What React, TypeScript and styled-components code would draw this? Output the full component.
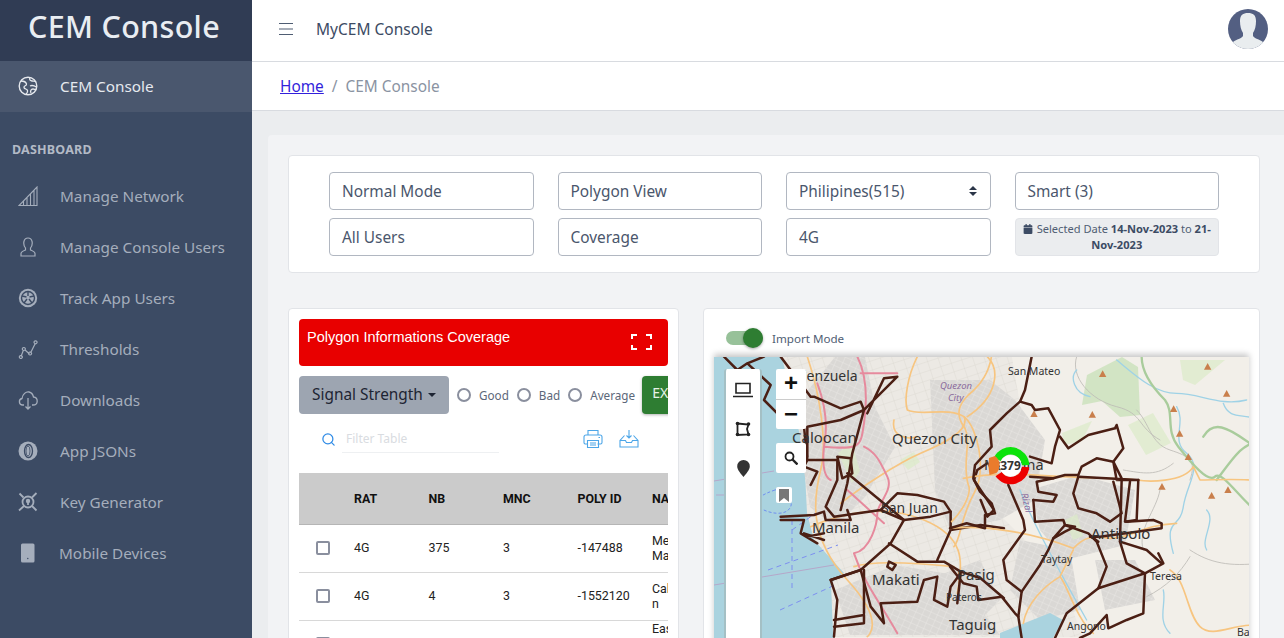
import React from 'react';
import styled, { createGlobalStyle } from 'styled-components';
import { FaCalendar } from 'react-icons/fa';
import { Search } from 'lucide-react';

const GlobalStyle = createGlobalStyle`
  html, body { margin: 0; height: 100%; overflow: hidden; background: #ebedef; }
  * { box-sizing: border-box; }
  body { font-family: "Noto Sans", "Open Sans", sans-serif; color: #3c4b64; }
`;

const Shell = styled.div`
  display: flex;
  height: 100vh;
  overflow: hidden;
`;

const Sidebar = styled.aside`
  flex: 0 0 252px;
  background: #3c4b64;
  color: #aab2bf;
`;

const Brand = styled.div`
  height: 61px;
  padding-right: 4px;
  background: #303c54;
  color: #e9edf2;
  font-size: 30.5px;
  font-weight: 500;
  line-height: 52px;
  text-align: center;
  letter-spacing: 0.3px;
`;

const SideHeading = styled.div`
  padding: 29px 0 0 12px;
  height: 58px;
  font-size: 12.5px;
  font-weight: 700;
  color: #b3bac6;
  letter-spacing: 0.2px;
`;

const NavItem = styled.div<{ $active?: boolean }>`
  display: flex;
  align-items: center;
  height: 51px;
  padding: 0 0 ${(p) => (p.$active ? '2px' : '0')} 18px;
  font-size: 15.3px;
  background: ${(p) => (p.$active ? '#4a576e' : 'transparent')};
  color: ${(p) => (p.$active ? '#e6e9ee' : '#a5aebc')};
`;

const NavIcon = styled.span<{ $tight?: boolean }>`
  flex: 0 0 ${(p) => (p.$tight ? '41px' : '42px')};
  display: flex;
  align-items: center;
`;

const Main = styled.main`
  flex: 1;
  min-width: 0;
`;

const TopBar = styled.header`
  display: flex;
  align-items: center;
  height: 62px;
  padding: 0 16px 4px 27px;
  background: #fff;
  border-bottom: 1px solid #d8dbe0;
`;

const TopTitle = styled.div`
  margin-left: 23px;
  flex: 1;
  font-size: 15.5px;
  color: #3c4b64;
`;

const Crumbs = styled.nav`
  display: flex;
  align-items: center;
  gap: 8px;
  height: 49px;
  padding: 0 0 0 28px;
  background: #fff;
  border-bottom: 1px solid #d8dbe0;
  font-size: 15.4px;
  color: #8a93a2;
`;

const CrumbLink = styled.a`
  color: #321fdb;
  text-decoration: underline;
`;

const Body = styled.div`
  margin: 24px 0 0 16px;
  padding: 20px 24px 0 20px;
  background: #f2f3f5;
  border-radius: 4px 0 0 0;
  height: 600px;
`;

const Card = styled.section`
  background: #fff;
  border: 1px solid #e2e4e8;
  border-radius: 4px;
`;

const FilterCard = styled(Card)`
  display: grid;
  grid-template-columns: repeat(4, 204.5px);
  grid-auto-rows: 38px;
  gap: 8px 24px;
  padding: 16px 0 16px 40px;
  height: 118px;
`;

const Field = styled.div`
  display: flex;
  align-items: center;
  justify-content: space-between;
  padding: 0 12px;
  border: 1px solid #b1b7c1;
  border-radius: 4px;
  font-size: 15.4px;
  color: #4a566c;
  background: #fff;
`;

const DateBox = styled.div`
  padding: 2px 4px;
  background: #ebedef;
  border: 1px solid #e2e4e8;
  border-radius: 4px;
  font-size: 11.1px;
  line-height: 16px;
  text-align: center;
  color: #4f5d73;
  svg { vertical-align: -1px; margin-right: 4px; color: #3c4b64; }
  b { color: #3c4b64; }
`;

const Columns = styled.div`
  display: flex;
  gap: 24px;
  margin-top: 35px;
`;

const TablePanel = styled(Card)`
  flex: 0 0 391px;
  min-width: 0;
  height: 500px;
  padding: 10px;
`;

const TableClip = styled.div`
  overflow: hidden;
  height: 100%;
`;

const MapPanel = styled(Card)`
  flex: 0 0 557px;
  height: 500px;
  padding: 0 10px;
`;

const RedBar = styled.div`
  display: flex;
  justify-content: space-between;
  height: 47px;
  padding: 10px 16px 0 8px;
  background: #e80000;
  border-radius: 4px;
  color: #fff;
  font-family: "Liberation Sans", Arial, sans-serif;
  font-size: 14.5px;
`;

const ExpandIcon = styled.svg`
  margin-top: 5px;
`;

const ControlRow = styled.div`
  display: flex;
  align-items: center;
  margin-top: 10px;
  height: 38px;
  white-space: nowrap;
`;

const DropButton = styled.div`
  display: flex;
  align-items: center;
  flex: 0 0 150px;
  height: 38px;
  justify-content: center;
  gap: 5px;
  padding-bottom: 1px;
  background: #9da5b1;
  border-radius: 4px;
  color: #1d2433;
  font-size: 15.4px;
  &::after {
    content: '';
    border-top: 4px solid #1d2433;
    border-left: 4px solid transparent;
    border-right: 4px solid transparent;
  }
`;

const RadioLabel = styled.label<{ $gap: number }>`
  display: flex;
  align-items: center;
  margin-left: ${(p) => p.$gap}px;
  font-size: 11.7px;
  color: #5c6779;
  gap: 8px;
`;

const RadioDot = styled.span`
  width: 14px;
  height: 14px;
  border: 2px solid #8a8f9e;
  border-radius: 50%;
`;

const ExportButton = styled.div`
  flex: 0 0 80px;
  margin-left: 7px;
  height: 38px;
  line-height: 34px;
  padding-left: 10px;
  background: #2e7d32;
  color: #e8f2e8;
  font-size: 14px;
  border-radius: 4px;
  box-shadow: 0 1px 3px rgba(0, 0, 0, 0.3);
`;

const ToolRow = styled.div`
  display: flex;
  align-items: center;
  height: 59px;
  padding: 0 0 9px 22px;
  color: #2f8be6;
`;

const FilterInput = styled.div`
  width: 157px;
  height: 28px;
  margin-left: 6px;
  padding: 5px 4px;
  border-bottom: 1px solid #eef0f2;
  font-size: 12px;
  color: #d9dce1;
`;

const ToolIcons = styled.div`
  display: flex;
  gap: 16px;
  margin-left: 84px;
`;

const DataTable = styled.table`
  width: 473px;
  table-layout: fixed;
  border-collapse: collapse;
  font-family: Roboto, "Noto Sans", sans-serif;
  font-size: 12.4px;
  color: #222;
  th {
    height: 51px;
    padding: 0;
    text-align: left;
    background: #cbcbcb;
    border-bottom: 1px solid #b5b5b5;
    font-weight: 700;
    color: #111;
  }
  td {
    height: 48px;
    padding: 0;
    border-bottom: 1px solid #d8d8d8;
    line-height: 15.5px;
  }
`;

const CheckBox = styled.span`
  display: block;
  margin-left: 17px;
  width: 14px;
  height: 14px;
  border: 2px solid #8a8f9e;
  border-radius: 2px;
`;

const ModeRow = styled.div`
  display: flex;
  align-items: center;
  height: 48px;
  padding: 10px 0 0 12px;
  font-size: 11.6px;
  color: #4f5d73;
`;

const Toggle = styled.span`
  position: relative;
  width: 37px;
  height: 14px;
  margin-right: 9px;
  background: #97c199;
  border-radius: 7px;
  &::after {
    content: '';
    position: absolute;
    top: -3px;
    right: 0;
    width: 20px;
    height: 20px;
    border-radius: 50%;
    background: #2e7d32;
    box-shadow: 0 1px 3px rgba(0, 0, 0, 0.35);
  }
`;

const MapFrame = styled.div`
  position: relative;
  width: 535px;
  height: 300px;
  overflow: hidden;
  background: #f2efe9;
  box-shadow: 0 -3px 6px rgba(0, 0, 0, 0.22);
  svg.base { display: block; }
`;

const ToolColumn = styled.div`
  position: absolute;
  top: 12px;
  left: 10px;
  bottom: 0;
  width: 38px;
  padding-top: 13px;
  display: flex;
  flex-direction: column;
  align-items: center;
  gap: 23px;
  background: #fff;
  border: solid rgba(90, 140, 150, 0.55);
  border-width: 0 2px;
  border-radius: 3px 3px 0 0;
`;

const ZoomBox = styled.div`
  position: absolute;
  top: 12px;
  left: 62px;
  width: 30px;
  background: #fff;
  border-radius: 2px;
`;

const ZoomBtn = styled.div`
  height: 30px;
  line-height: 28px;
  text-align: center;
  font-family: "Liberation Sans", sans-serif;
  font-size: 24px;
  font-weight: 700;
  color: #111;
  & + & { border-top: 1px solid #ccc; }
`;

const SearchBtn = styled.div`
  position: absolute;
  top: 86px;
  left: 62px;
  width: 30px;
  height: 30px;
  display: flex;
  align-items: center;
  justify-content: center;
  background: #fff;
  border-radius: 2px;
`;

const BookmarkBtn = styled.div`
  position: absolute;
  top: 130px;
  left: 62px;
  width: 16px;
  height: 16px;
  display: flex;
  align-items: center;
  justify-content: center;
  background: #fff;
  border-radius: 2px;
`;

const ROW_DATA = [
  { rat: '4G', nb: '375', mnc: '3', id: '-147488', name: ['Metro', 'Manila'] },
  { rat: '4G', nb: '4', mnc: '3', id: '-1552120', name: ['Calooca', 'n'] },
  { rat: '4G', nb: '12', mnc: '3', id: '-1552133', name: ['Eastwoo', 'd', 'City'] },
];

const NAV = [
  { label: 'Manage Network', icon: 'signal' },
  { label: 'Manage Console Users', icon: 'user' },
  { label: 'Track App Users', icon: 'fan' },
  { label: 'Thresholds', icon: 'graph' },
  { label: 'Downloads', icon: 'cloud' },
  { label: 'App JSONs', icon: 'json' },
  { label: 'Key Generator', icon: 'key' },
  { label: 'Mobile Devices', icon: 'mobile' },
];

function SideIcon({ name }: { name: string }) {
  const s = { fill: 'none', stroke: 'currentColor', strokeWidth: 1.1 };
  return (
    <svg width="20" height="20" viewBox="0 0 20 20" {...s}>
      {name === 'globe' && (
        <>
          <circle cx="10" cy="10" r="8.8" strokeWidth="1.4" />
          <path d="M3 5c3 0 5 1 5.500 3s-3 1.500-2.500 3.500 3 1 3.500 3-1 3-1.500 4M12 1.500c-1 2 0 3 2 3.500s3-.5 4 1M12 10c2-1 4-.5 6.500 1M13 17c-1-2 0-4 2-4s2 1 3 0" strokeWidth="1.3" />
        </>
      )}
      {name === 'signal' && <path d="M1 19.500h18V1L1 19.500ZM5.500 15v4.500M9 11.500v8M12.500 8v11.500M16 4.500v15" />}
      {name === 'user' && <path d="M3 19v-2.500c0-1.500 2-2.500 4.500-3.500v-2c-3-4-2-10 2.500-10s5.500 6 2.500 10v2c2.500 1 4.500 2 4.500 3.500V19H3Z" strokeWidth="1.2" />}
      {name === 'fan' && (
        <>
          <circle cx="10" cy="10" r="9.200" fill="currentColor" stroke="none" />
          <g stroke="#3c4b64" strokeWidth="1.4">
            <circle cx="10" cy="10" r="6.500" />
            <path d="M10 3.500 10 8M16 8l-4.500 1M14 15l-3-4M6 15l3-4M4 8l4.500 1" />
          </g>
        </>
      )}
      {name === 'graph' && (
        <path d="M3 17.500 5.500 11M6.500 10.500l5 4.500M12.500 14 17 5M2.800 16.500a1.500 1.500 0 1 0 .1 0ZM5.800 8.500a1.500 1.500 0 1 0 .1 0ZM12 13a1.500 1.500 0 1 0 .1 0ZM17.500 1.800a1.500 1.500 0 1 0 .1 0Z" strokeWidth="1.2" />
      )}
      {name === 'cloud' && (
        <path d="M6 15H4.500C1 15 0 9.500 4 8.500 4.500 4 8 1.500 11 2c2.500.5 4 2.500 4.500 5 5 .5 5 8-.5 8h-1M10 8v11M7.500 16.500 10 19l2.500-2.500" strokeWidth="1.3" />
      )}
      {name === 'json' && (
        <>
          <circle cx="10" cy="10" r="9.500" fill="currentColor" stroke="none" />
          <ellipse cx="10.500" cy="10" rx="4" ry="6.500" stroke="#3c4b64" strokeWidth="1.300" />
          <ellipse cx="10" cy="10" rx="2" ry="5" stroke="#3c4b64" strokeWidth=".8" />
        </>
      )}
      {name === 'key' && (
        <>
          <circle cx="10" cy="10" r="5.500" strokeWidth="1.800" />
          <circle cx="10" cy="9" r="2.200" fill="currentColor" stroke="none" />
          <path d="M10 10v3M1.500 1.500l4 4M18.500 1l-4.500 4.500M1 18.500l5-4.500M18.500 18.500l-4.500-4.500" strokeWidth="1.800" />
        </>
      )}
      {name === 'mobile' && (
        <>
          <rect x="3" y="0.500" width="13.500" height="19" rx="1.500" fill="currentColor" stroke="none" />
          <circle cx="9.800" cy="15.500" r=".7" fill="#3c4b64" stroke="none" />
        </>
      )}
    </svg>
  );
}

const ROADS_LEFT = [
  'M310 110c40 120 60 260 40 340s-40 200 80 330 60 170 60 170',
  'M640 110c-30 60-40 130-30 160 40 20 120-10 170 20 20 40-60 80-130 110s-190 110-240 150',
  'M850 110c40 40 30 120-60 180M780 290c40 30 70 160 30 230s-40 140-60 160',
  'M320 620c90-40 220-70 340-20s120 120 100 220M570 300c-10 50 40 60 70 50M450 740c60-20 200-10 300 0',
];
const PINK_LEFT = [
  'M460 110c30 60 30 130 20 200s-10 80-120 70c-5 50 0 90 20 100M480 380c40 20 50 50 70 90s-30 80-30 110-20 110-70 120c30 90 80 150 130 240',
  'M340 190c30 80 30 140 20 190M430 510l110 100M470 160l110 0',
];
const POLY_LEFT = [
  'M60 110l40 40 30-20 70 65-20 45 70 70 50 10 10 100-10 20 40 15-20 40M130 130l50-20',
  'M230 110l90 120h10l80 35 60-20 10 25-70 30-100 20v90M480 270l-35 130-15 90-20 80M490 280l50-105 40-5-30 30-70 70',
  'M310 420h90v60l-35 80 25 30 140-20 70 30 80-10 60-15-20-30-80-20-60-5-50 50',
  'M430 460l170 140-40 70-90 80-90 30 20 60-10 110',
  'M230 590l100-5 30-10 5 25h75l-10-30M230 600h70l-10 40 50 30M300 640l60 20M310 650l50-10',
  'M555 670l85 55h80l50 30 60 20 70 60M740 575v55l90-15 70 10M740 630l-40 90',
  'M470 750l30 110 40 50-10-60 110-5 20-65 40-10-10 70 40 20 10-60 30-40-10 90',
  'M390 900l90-15v25l-90 10M480 750v130M380 780l90-30',
  'M555 725l20 10-10 15-15-10zM400 410l40 5 5 45-30 15z',
  'M830 540l20 50 20-20-40-60-20-30 10-30 30-20',
];
const ROADS_RIGHT = [
  'M125 15c-5 40-20 80-70 120-30 30-40 60-10 100 20 40-10 110 10 170 10 20-10 70-50 110',
  'M0 535c100-10 240 10 370 60 30-30 50-40 110-30 70 0 90-40 200-45',
  'M330 680c-50 30-100 80-110 140M330 680c20 20 50 130 100 170M370 600l-40 80',
  'M40 385c100-20 200-10 300-5s190 5 220 10 140 10 170-40l20 40c60 0 180-10 240 20',
  'M660 660c50 30 50 130 90 170s120-20 180 0',
];
const GREEN_RIGHT = [
  'M575 20c0 50 40 100 70 130 30 40 0 90 40 140s90 110 110 90 70 60 130 110',
  'M760 260c30-50 70-30 140 20M800 390c60-80 70-100 130-120',
];
const RIVERS_RIGHT = [
  'M500 30c50 40 110 100 180 100s130 40 210 20M680 170c30 50-20 100 30 140s0 90-10 160-60 30-30 140M820 160c20 60 80 20 110 60',
  'M380 60c-20 20-10 70 40 80M210 420c30 80 110 230 200 390M770 480c30 30-20 90 0 120M640 720c10 40-20 90 20 130',
];
const THIN_RIGHT = [
  'M380 20c-20 60 40 130 120 150s60 60 130 100M560 180c40 40 40 100 100 120s80 30 60 90M720 600c60 40 120 50 210 40M590 740c60-30 100-70 130-120',
  'M630 420c-10 60-70 120-50 180M520 360c60 10 100 20 150-20',
];
const POLY_RIGHT = [
  'M245 20l-20 100-15 35-40 35-50 50 5 50-50 55-5 40 20 40 35 35 10 30-30 5v40l-55-15-50 15',
  'M210 155l35 10 10 15 40-5 35 65-15 50-10 50-65-20',
  'M330 260l25 35 60-40 80-20 5-10 20 70-30 40-50-10-45 25-10 25h-40l-35 10-70-5',
  'M385 380l180 10h-65l-10-55 25 50',
  'M175 405l45 105 5 30-65 90 10 60 45 35 55-80 25-45 15-35 35-40 70 25 25 25 30 75-25 65 140-45 55-30-15-30',
  'M565 390l-5 120-35 5 15-120',
  'M385 380l-15 50 15 45 55 15 40 25 35-25-25-95',
  'M515 390l-5 185 20 65 55 30-5 120-50 20-55 25-5-40-50 55-30 14',
  'M510 575l80 25 45 40',
  'M530 515l80-5 25 10v15l-75 10-110 15h-30',
  'M250 450l5 65 85-5 5 15 30 5-30 15-35 20',
  'M260 395l5 30 55 10-10 20-60-5M260 395l50-10',
  'M445 715l-95 75-35 74M215 725l-10 75 10 64',
  'M0 650l40 50 40 10 5 40 70-10 40 50 10 10M425 560l20 15',
];
const PEAKS = [[458, 72], [773, 50], [830, 131], [671, 177], [252, 192], [427, 194], [689, 251], [715, 321], [636, 410], [785, 437], [834, 420]];

function MapArt() {
  return (
    <svg className="base" width="535" height="300" viewBox="714 357 535 300">
      <defs>
        <pattern id="streets" width="7" height="6" patternUnits="userSpaceOnUse" patternTransform="rotate(24)">
          <rect width="7" height="6" fill="#dad8d5" />
          <path d="M0 0H7M0 0V6" stroke="#eceae6" strokeWidth=".7" />
        </pattern>
        <pattern id="suburb" width="11" height="9" patternUnits="userSpaceOnUse" patternTransform="rotate(-18)">
          <rect width="11" height="9" fill="#ece9e4" />
          <path d="M0 0H11M0 0V9" stroke="#d2cfca" strokeWidth=".6" />
        </pattern>
      </defs>
      <rect x="714" y="357" width="535" height="300" fill="#f2efe9" />
      <path d="M782 357h230l15 90-25 70 60 60 20 60H835l-22-97-8-27-1-60Z" fill="url(#suburb)" />
      <path d="M714 357h68l22 96 3 60 7 27 30 33-13 10 3 74H714Z" fill="#aad3df" />
      <path d="M716 495h15M714 481l60-10M714 585l120-20" stroke="#b5a7c9" strokeWidth="1" fill="none" />
      <path d="M768 570l70-25M780 610l55-25M792 530l28-20M792 520v70" stroke="#7d8ff0" strokeWidth="1" strokeDasharray="5 4" fill="none" />
      <path d="M775 490c-15 5-25 12-15 18s25 8 30 0-5-22-15-18Z" fill="none" stroke="#6f8ff0" strokeDasharray="3 2" />
      <g fill="url(#streets)">
        <path d="M800 400l35-43h30l10 50 20 40-30 50-30 30-25-20-10-60Z" />
        <path d="M835 590l60-25 60 10 45 60H850Z" />
        <path d="M930 380h60l25 20 30 40-10 60-35 20-50 10-15-40Z" />
        <path d="M1030 490l50-15 55 15-10 55-60 15-25-30ZM940 575l40-15 20 40-30 30-30-20ZM1020 540l50 10 10 60-40 10-30-30ZM1095 560h40l20 40-50 10Z" />
      </g>
      <path d="M1000 633l50-20 13 7-10 18h-53Z" fill="#aad3df" />
      <g fill="#c4e0b4" opacity=".7">
        <path d="M1087 375l35-18 16 10 2 48-20 2-18-16-20 4Z" />
      </g>
      <g fill="#dcebc8" opacity=".7">
        <path d="M1062 433l30-12-10 20-18 4ZM1128 425l25-12 18 30-25 12ZM1065 520l12-6 6 22-10 4ZM838 453l14-10 8 28-8 12ZM900 460l14-8 6 10-12 8ZM1180 360l45 0-30 25-12-5Z" />
      </g>
      <g transform="translate(704 320) scale(.3333)" fill="none" strokeLinejoin="round" strokeLinecap="round">
        {ROADS_LEFT.map((d) => (
          <path key={d} d={d} stroke="#f7c580" strokeWidth="5" />
        ))}
        {PINK_LEFT.map((d) => (
          <path key={d} d={d} stroke="#e68a9d" strokeWidth="6" />
        ))}
        {POLY_LEFT.map((d) => (
          <path key={d} d={d} stroke="#4b1f14" strokeWidth="7.500" />
        ))}
      </g>
      <g transform="translate(950 350) scale(.3333)" fill="none" strokeLinejoin="round" strokeLinecap="round">
        {THIN_RIGHT.map((d) => (
          <path key={d} d={d} stroke="#bdbab6" strokeWidth="2.500" />
        ))}
        {RIVERS_RIGHT.map((d) => (
          <path key={d} d={d} stroke="#9fd2e6" strokeWidth="4" />
        ))}
        {GREEN_RIGHT.map((d) => (
          <path key={d} d={d} stroke="#a9cc9c" strokeWidth="7" />
        ))}
        {ROADS_RIGHT.map((d) => (
          <path key={d} d={d} stroke="#f7c580" strokeWidth="5" />
        ))}
        {PEAKS.map(([x, y]) => (
          <path key={x} d={`M${x} ${y - 11}l11 20h-22Z`} fill="#c97f4c" />
        ))}
        {POLY_RIGHT.map((d) => (
          <path key={d} d={d} stroke="#4b1f14" strokeWidth="7.500" />
        ))}
      </g>
      <g fontFamily='"Noto Sans", sans-serif' fill="#333">
        <text x="787" y="381" fontSize="14">Valenzuela</text>
        <text x="792" y="443" fontSize="15">Caloocan</text>
        <text x="892" y="444" fontSize="15">Quezon City</text>
        <text x="881" y="513" fontSize="14">San Juan</text>
        <text x="812" y="533" fontSize="15">Manila</text>
        <text x="872" y="585" fontSize="15">Makati</text>
        <text x="957" y="580" fontSize="15">Pasig</text>
        <text x="949" y="630" fontSize="15">Taguig</text>
        <text x="1091" y="539" fontSize="15">Antipolo</text>
        <text x="984" y="470" fontSize="14.500">Marikina</text>
        <text x="1008" y="375" fontSize="10.500">San Mateo</text>
        <text x="1041" y="563" fontSize="10.500">Taytay</text>
        <text x="1150" y="580" fontSize="10.500">Teresa</text>
        <text x="1067" y="630" fontSize="10.500">Angono</text>
        <text x="946" y="601" fontSize="10">Pateros</text>
        <text x="1237" y="636" fontSize="10.500">Ba</text>
        <g fill="#8a6a9c" fontSize="9.500" fontStyle="italic">
          <text x="940" y="389">Quezon</text>
          <text x="948" y="401">City</text>
          <text x="0" y="0" transform="translate(1021 494) rotate(76)">Rizal</text>
        </g>
      </g>
      <g fill="none" strokeWidth="7.500">
        <path d="M997.300 459.400A14.800 14.800 0 0 1 1025.500 465.200" stroke="#0be30b" />
        <path d="M1025.500 467A14.800 14.800 0 0 1 998.600 474.200" stroke="#ee0000" />
      </g>
      <path d="M989 458l6-2c3 2 4.500 5 4.500 9 0 3-1 6-3 8l-7 2c-1-6-1-11-.5-17Z" fill="#ea7b2c" />
      <circle cx="1010.700" cy="465.700" r="10.800" fill="#fff" />
      <text x="1010.500" y="470" textAnchor="middle" fontFamily='"Noto Sans", sans-serif' fontSize="12" fontWeight="700" fill="#333">379</text>
    </svg>
  );
}

export default function App() {
  return (
    <Shell>
      <GlobalStyle />
      <Sidebar>
        <Brand>CEM Console</Brand>
        <NavItem $active>
          <NavIcon>
            <SideIcon name="globe" />
          </NavIcon>
          CEM Console
        </NavItem>
        <SideHeading>DASHBOARD</SideHeading>
        {NAV.map((n) => (
          <NavItem key={n.label}>
            <NavIcon $tight={n.icon === 'mobile'}>
              <SideIcon name={n.icon} />
            </NavIcon>
            {n.label}
          </NavItem>
        ))}
      </Sidebar>
      <Main>
        <TopBar>
          <svg width="14" height="12" viewBox="0 0 14 12" stroke="#4f5d73" strokeWidth="1">
            <path d="M0 .5h14M0 6h14M0 11.500h14" />
          </svg>
          <TopTitle>MyCEM Console</TopTitle>
          <svg width="40" height="40" viewBox="0 0 40 40">
            <defs>
              <clipPath id="avatarClip">
                <circle cx="20" cy="20" r="20" />
              </clipPath>
            </defs>
            <circle cx="20" cy="20" r="20" fill="#535f82" />
            <path
              clipPath="url(#avatarClip)"
              d="M12 12c0-6 3-8 8-8s8 2 8 8c0 5-1 9-3 12v3c2 3 6 3 10 6v8H5v-8c4-3 8-3 10-6v-3c-2-3-3-7-3-12Z"
              fill="#e9edef"
            />
          </svg>
        </TopBar>
        <Crumbs>
          <CrumbLink href="#home">Home</CrumbLink>
          <span>/</span>
          <span>CEM Console</span>
        </Crumbs>
        <Body>
          <FilterCard>
            <Field>Normal Mode</Field>
            <Field>Polygon View</Field>
            <Field>
              Philipines(515)
              <svg width="10" height="12" viewBox="0 0 10 12" fill="#2b3648">
                <path d="M1 5l4-4 4 4ZM1 7l4 4 4-4Z" />
              </svg>
            </Field>
            <Field>Smart (3)</Field>
            <Field>All Users</Field>
            <Field>Coverage</Field>
            <Field>4G</Field>
            <DateBox>
              <FaCalendar size={10} />
              Selected Date <b>14-Nov-2023</b> to <b>21-Nov-2023</b>
            </DateBox>
          </FilterCard>
          <Columns>
            <TablePanel>
              <TableClip>
                <RedBar>
                  Polygon Informations Coverage
                  <ExpandIcon width="21" height="16" viewBox="0 0 21 16" fill="none" stroke="#fff" strokeWidth="2">
                    <path d="M6 1H1v4M15 1h5v4M6 15H1v-4M15 15h5v-4" />
                  </ExpandIcon>
                </RedBar>
                <ControlRow>
                  <DropButton>Signal Strength</DropButton>
                  <RadioLabel $gap={8}>
                    <RadioDot />
                    Good
                  </RadioLabel>
                  <RadioLabel $gap={8}>
                    <RadioDot />
                    Bad
                  </RadioLabel>
                  <RadioLabel $gap={8}>
                    <RadioDot />
                    Average
                  </RadioLabel>
                  <ExportButton>EXPORT</ExportButton>
                </ControlRow>
                <ToolRow>
                  <Search size={15} strokeWidth={2} />
                  <FilterInput>Filter Table</FilterInput>
                  <ToolIcons>
                    <svg width="20" height="20" viewBox="0 0 20 20" fill="none" stroke="#4da6e8" strokeWidth="1.100">
                      <path d="M5 6V1.500h10V6M4.500 15H2a1.500 1.500 0 0 1-1-1.500V8c0-1 1-2 2-2h14c1 0 2 1 2 2v5.500c0 1-.5 1.500-1.500 1.500h-3M4.500 11.500h11V18.500h-11ZM15.500 8.500h1.500M7 14h6M7 16h6" />
                    </svg>
                    <svg width="20" height="20" viewBox="0 0 20 20" fill="none" stroke="#4da6e8" strokeWidth="1.100">
                      <path d="M5.500 6.500 1 11.500V18h18v-6.500l-4.500-5M1 11.500h5.500l1 2h5l1-2H19M10 1v8M7.500 6.500 10 9l2.500-2.500" />
                    </svg>
                  </ToolIcons>
                </ToolRow>
                <DataTable>
                  <colgroup>
                    <col width="55" />
                    <col width="74.500" />
                    <col width="74.500" />
                    <col width="74.500" />
                    <col width="74.500" />
                    <col width="120" />
                  </colgroup>
                  <thead>
                    <tr>
                      <th />
                      <th>RAT</th>
                      <th>NB</th>
                      <th>MNC</th>
                      <th>POLY ID</th>
                      <th>NAME</th>
                    </tr>
                  </thead>
                  <tbody>
                    {ROW_DATA.map((r) => (
                      <tr key={r.id}>
                        <td>
                          <CheckBox />
                        </td>
                        <td>{r.rat}</td>
                        <td>{r.nb}</td>
                        <td>{r.mnc}</td>
                        <td>{r.id}</td>
                        <td>
                          {r.name.map((line) => (
                            <div key={line}>{line}</div>
                          ))}
                        </td>
                      </tr>
                    ))}
                  </tbody>
                </DataTable>
              </TableClip>
            </TablePanel>
            <MapPanel>
              <ModeRow>
                <Toggle />
                Import Mode
              </ModeRow>
              <MapFrame>
                <MapArt />
                <ToolColumn>
                  <svg width="20" height="16" viewBox="0 0 20 16" fill="none" stroke="#222" strokeWidth="1.600">
                    <path d="M3 1.500h14V11H3ZM0 14.500h20" />
                  </svg>
                  <svg width="16" height="16" viewBox="0 0 16 16" fill="none" stroke="#222" strokeWidth="1.800">
                    <path d="M2.500 2.500l11 1-1.500 4.500 1.500 5.500-11 .5Z" />
                    <g fill="#222" stroke="none">
                      <circle cx="2.500" cy="2.500" r="1.800" />
                      <circle cx="13.500" cy="3" r="1.800" />
                      <circle cx="13.500" cy="13.500" r="1.800" />
                      <circle cx="2.500" cy="13.500" r="1.800" />
                    </g>
                  </svg>
                  <svg width="13" height="17" viewBox="0 0 13 17" fill="#333">
                    <path d="M6.500 0a6.300 6.300 0 0 1 6.300 6.300C12.800 10 9 14 6.500 17 4 14 .2 10 .2 6.300A6.300 6.300 0 0 1 6.500 0Z" />
                  </svg>
                </ToolColumn>
                <ZoomBox>
                  <ZoomBtn>+</ZoomBtn>
                  <ZoomBtn>−</ZoomBtn>
                </ZoomBox>
                <SearchBtn>
                  <svg width="14" height="14" viewBox="0 0 14 14" fill="none" stroke="#222" strokeWidth="1.800">
                    <circle cx="5.500" cy="5.500" r="4" />
                    <path d="M8.500 8.500l5 5" strokeWidth="2.400" />
                  </svg>
                </SearchBtn>
                <BookmarkBtn>
                  <svg width="10" height="13" viewBox="0 0 10 13" fill="#777">
                    <path d="M0 0h10v13L5 9l-5 4Z" />
                  </svg>
                </BookmarkBtn>
              </MapFrame>
            </MapPanel>
          </Columns>
        </Body>
      </Main>
    </Shell>
  );
}
